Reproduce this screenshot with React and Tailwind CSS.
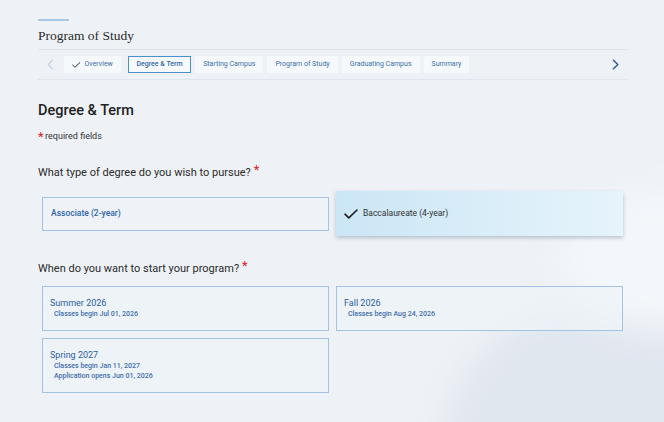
import React from "react";

const tabs = [
  { label: "Overview", done: true },
  { label: "Degree & Term", active: true },
  { label: "Starting Campus" },
  { label: "Program of Study" },
  { label: "Graduating Campus" },
  { label: "Summary" },
];

const terms = [
  { title: "Summer 2026", lines: ["Classes begin Jul 01, 2026"] },
  { title: "Fall 2026", lines: ["Classes begin Aug 24, 2026"] },
  { title: "Spring 2027", lines: ["Classes begin Jan 11, 2027", "Application opens Jun 01, 2026"] },
];

function Check({ className }) {
  return (
    <svg className={className} viewBox="0 0 14 10" fill="none">
      <path d="M1 5.2 L4.8 8.8 L13 1" stroke="currentColor" strokeWidth="1.6" strokeLinecap="round" strokeLinejoin="round" />
    </svg>
  );
}

function Req() {
  return <span className="text-[#e0201b] text-[13px] leading-none relative -top-[3px] ml-[3px]">*</span>;
}

function TabBar() {
  return (
    <div className="mt-[5px] h-[31px] border-y border-[#dde6ef] flex items-center pl-[9px] pr-[8px]">
      <svg className="w-[7px] h-[11px] text-[#c3d2e2] mr-[10px]" viewBox="0 0 7 11" fill="none">
        <path d="M6 0.8 L1.2 5.5 L6 10.2" stroke="currentColor" strokeWidth="1.2" />
      </svg>
      <div className="flex items-center gap-[4px]">
        {tabs.map((t) => (
          <div
            key={t.label}
            className={
              t.active
                ? "h-[17px] px-[7.5px] flex items-center border-[1.5px] border-[#4a90c9] bg-[#f7fafd] text-[7px] font-medium text-[#2f66a4] ml-[3px]"
                : "h-[17px] px-[8px] flex items-center bg-[#f6f9fc] text-[7px] text-[#3b6fa8]"
            }
          >
            {t.done && <Check className="w-[8.5px] h-[6px] text-[#222] mr-[4px]" />}
            {t.label}
          </div>
        ))}
      </div>
      <svg className="ml-auto w-[7px] h-[11px] text-[#2a5a96]" viewBox="0 0 7 11" fill="none">
        <path d="M1 0.8 L5.8 5.5 L1 10.2" stroke="currentColor" strokeWidth="1.4" />
      </svg>
    </div>
  );
}

export default function App() {
  return (
    <div className="relative min-h-screen overflow-hidden bg-[#eef2f7] font-['Roboto',sans-serif] text-[#222]">
      {/* soft background shapes */}
      <div className="pointer-events-none absolute left-[440px] top-[300px] w-[420px] h-[300px] rounded-tl-[160px] bg-[#e1e7ef] blur-[14px]" />
      <div className="pointer-events-none absolute left-[560px] top-[190px] w-[200px] h-[140px] rounded-[50%] bg-[#f3f6fa] blur-[18px]" />
      <div className="relative w-[627px] pl-[38px] pt-[19px]">
        <div className="h-[2px] w-[31px] bg-[#a8c8e8]" />
        <h1 className="mt-[7px] font-['Liberation_Serif',serif] text-[13.5px] leading-[16px] text-[#2a2a2a]">Program of Study</h1>
        <TabBar />

        <h2 className="mt-[22px] text-[14.5px] leading-[18px] font-medium text-[#222]">Degree &amp; Term</h2>
        <div className="mt-[9px] flex items-center text-[9px] leading-[12px] text-[#333]">
          <span className="text-[#e0201b] text-[13px] leading-none relative top-[1px] mr-[1.5px]">*</span>
          required fields
        </div>

        <div className="mt-[24px] flex items-start text-[11px] leading-[14px] text-[#2a2a2a]">
          What type of degree do you wish to pursue?
          <Req />
        </div>

        <div className="mt-[11px] ml-[4px] w-[581px] grid grid-cols-2 gap-[7px] items-center">
          <div className="h-[34px] flex items-center pl-[8px] border border-[#a4c2e3] bg-[#eff3f8] text-[8.5px] font-medium text-[#2e64a8]">
            Associate (2-year)
          </div>
          <div className="h-[45px] flex items-center pl-[8px] bg-gradient-to-r from-[#cbe6f6] to-[#e6f4fb] shadow-[0_2px_4px_rgba(40,60,90,0.28)] text-[8.5px] text-[#333]">
            <Check className="w-[14px] h-[10px] text-[#1c1c1c] mr-[5px]" />
            Baccalaureate (4-year)
          </div>
        </div>

        <div className="mt-[26px] flex items-start text-[11px] leading-[14px] text-[#2a2a2a]">
          When do you want to start your program?
          <Req />
        </div>

        <div className="mt-[10px] ml-[4px] w-[581px] grid grid-cols-2 gap-[7px] items-start">
          {terms.map((t) => (
            <div key={t.title} className="border border-[#a4c2e3] bg-[#eef3f8]/70 pl-[7px] pt-[10px] pb-[11px]">
              <div className="text-[9px] leading-[12px] text-[#2b5e9c]">{t.title}</div>
              {t.lines.map((l) => (
                <div key={l} className="ml-[4px] text-[7px] leading-[10px] font-medium text-[#3e6eab]">{l}</div>
              ))}
            </div>
          ))}
        </div>
      </div>
    </div>
  );
}
